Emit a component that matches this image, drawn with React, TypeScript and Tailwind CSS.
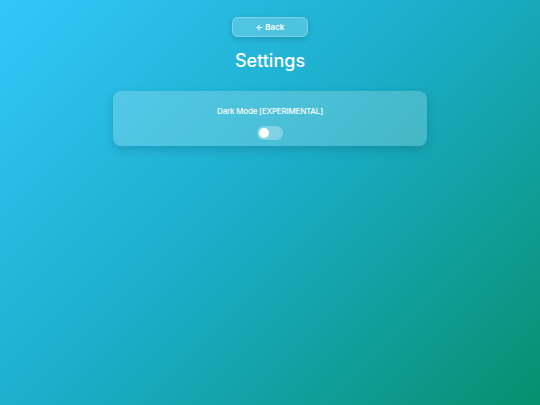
import { useState } from "react";

export default function App() {
  const [dark, setDark] = useState(false);

  return (
    <div className="min-h-[405px] w-full bg-[linear-gradient(135deg,#33c7fa_0%,#1aacc6_50%,#06906e_100%)] font-['Inter','Noto_Sans',sans-serif] text-white">
      <div className="flex flex-col items-center pt-[17px]">
        <button className="flex h-[20px] w-[76px] items-center justify-center rounded-[6px] border border-white/25 bg-white/20 text-[8px] font-semibold shadow-[0_2px_6px_rgba(0,40,60,0.2)]">
          ← Back
        </button>
        <h1 className="mt-[12px] text-[18px] font-medium leading-[24px]">Settings</h1>
        <div className="mt-[18px] flex h-[55px] w-[314px] flex-col items-center rounded-[8px] bg-white/20 pt-[14px] shadow-[0_4px_10px_rgba(0,40,60,0.18)]">
          <p className="text-[8px] font-medium leading-[12px] tracking-[-0.2px]">Dark Mode [EXPERIMENTAL]</p>
          <button
            onClick={() => setDark(!dark)}
            className="mt-[9px] flex h-[14px] w-[26px] items-center rounded-full bg-white/30 px-[2px]"
          >
            <span className={dark ? "ml-auto h-[10px] w-[10px] rounded-full bg-white" : "h-[10px] w-[10px] rounded-full bg-white"} />
          </button>
        </div>
      </div>
    </div>
  );
}
